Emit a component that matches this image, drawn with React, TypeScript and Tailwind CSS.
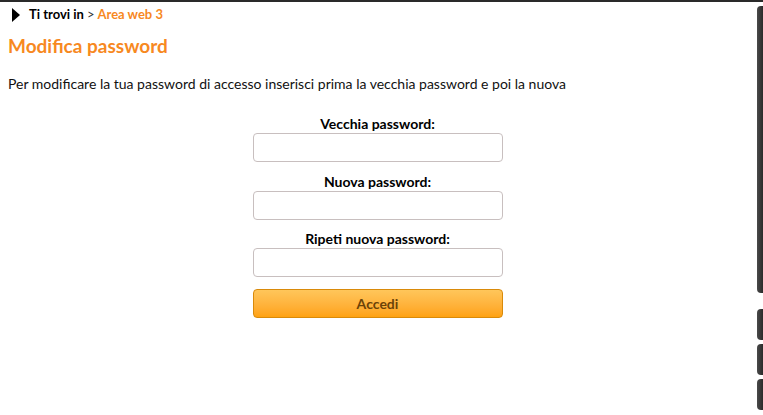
import React from "react";

const font = { fontFamily: "Lato, 'Open Sans', sans-serif" };

function Field({ label }: { label: string }) {
  return (
    <div className="flex flex-col items-center">
      <label className="text-[14px] font-bold text-black leading-[16px] mb-[1px]">{label}</label>
      <input
        type="password"
        className="w-[250px] h-[29px] rounded-[4px] border border-[#c8bfbf] bg-white outline-none"
      />
    </div>
  );
}

export default function App() {
  return (
    <div className="w-[763px] h-[415px] bg-white flex flex-col overflow-hidden" style={font}>
      <div className="h-[2px] bg-[#2a2a2a] w-full shrink-0" />
      <div className="flex flex-1">
        <div className="flex-1 flex flex-col">
          <div className="flex items-center h-[24px] pl-[12px] pt-[1px] text-[13px]">
            <svg width="8" height="14" viewBox="0 0 8 14" className="mr-[9px]">
              <polygon points="0,0 8,7 0,14" fill="#000" />
            </svg>
            <span className="font-bold text-black">Ti trovi in</span>
            <span className="text-[#333] mx-[3px]">&gt;</span>
            <span className="font-bold text-[#f7891f]">Area web 3</span>
          </div>
          <h1 className="pl-[8px] mt-[9px] text-[19px] leading-[22px] font-bold text-[#f7891f]">
            Modifica password
          </h1>
          <p className="pl-[8px] mt-[18px] text-[14px] leading-[18px] text-[#111]">
            Per modificare la tua password di accesso inserisci prima la vecchia password e poi la nuova
          </p>
          <div className="flex flex-col items-center gap-[11.5px] mt-[23px] pr-[2px]">
            <Field label="Vecchia password:" />
            <Field label="Nuova password:" />
            <Field label="Ripeti nuova password:" />
            <button className="w-[250px] h-[29px] rounded-[4px] border border-[#d98a0a] bg-gradient-to-b from-[#ffc65a] to-[#ffa20f] text-[14px] font-bold text-[#6b4308]">
              Accedi
            </button>
          </div>
        </div>
        <div className="w-[6px] flex flex-col pt-[4px] gap-[4px]">
          <div className="h-[287px] rounded-tl-[4px] rounded-bl-[4px] bg-gradient-to-r from-[#4a4a4a] to-[#2a2a2a]" />
          <div className="h-[8px]" />
          <div className="h-[31px] rounded-l-[4px] bg-gradient-to-r from-[#4a4a4a] to-[#2a2a2a]" />
          <div className="h-[31px] rounded-l-[4px] bg-gradient-to-r from-[#4a4a4a] to-[#2a2a2a]" />
          <div className="h-[31px] rounded-l-[4px] bg-gradient-to-r from-[#4a4a4a] to-[#2a2a2a]" />
        </div>
      </div>
    </div>
  );
}
